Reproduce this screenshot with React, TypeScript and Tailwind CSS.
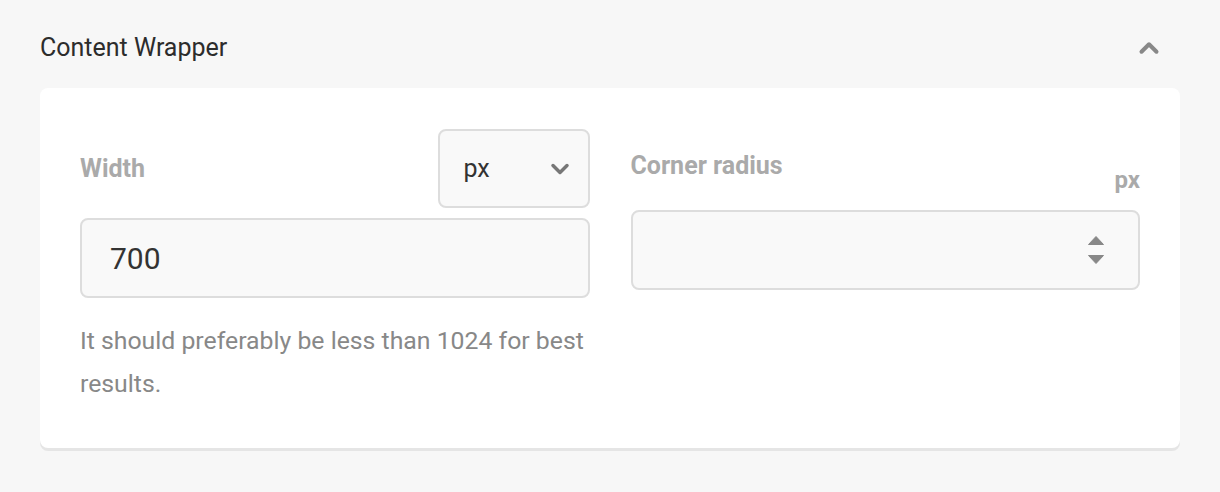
import { ChevronDown, ChevronUp } from 'lucide-react'

export default function App() {
  return (
    <div className="min-h-[492px] bg-[#f7f7f7] px-10 font-['Roboto',_'Liberation_Sans',_sans-serif]">
      <div className="flex h-[88px] items-center justify-between pt-[8px] pr-[16px]">
        <h2 className="text-[25px] text-[#2c2c2c]">Content Wrapper</h2>
        <ChevronUp size={30} strokeWidth={3.2} className="text-[#888]" />
      </div>

      <div className="grid grid-cols-2 gap-[41px] rounded-lg bg-white px-10 pt-[41px] pb-[43px] shadow-[0_3px_0_0_#e5e5e5]">
        {/* width */}
        <div>
          <div className="flex items-center justify-between">
            <label className="text-[25px] font-bold text-[#aaa]">Width</label>
            <div className="flex h-[79px] w-[152px] items-center justify-between rounded-lg border-2 border-[#ddd] bg-[#f9f9f9] pl-6 pr-[14px]">
              <span className="text-[25px] text-[#333]">px</span>
              <ChevronDown size={28} strokeWidth={3} className="text-[#777]" />
            </div>
          </div>
          <div className="mt-[10px] flex h-[80px] items-center rounded-lg border-2 border-[#ddd] bg-[#f9f9f9] px-[28px]">
            <span className="text-[30px] text-[#333]">700</span>
          </div>
          <p className="mt-[21px] text-[24.8px] leading-[43px] text-[#888]">
            It should preferably be less than 1024 for best results.
          </p>
        </div>

        {/* corner radius */}
        <div>
          <div className="flex h-[81px] justify-between">
            <label className="pt-[18px] text-[25px] font-bold text-[#aaa]">Corner radius</label>
            <span className="pt-[33px] text-[24px] font-bold text-[#aaa]">px</span>
          </div>
          <div className="flex h-[80px] items-center justify-end rounded-lg border-2 border-[#ddd] bg-[#f9f9f9] pr-[34px]">
            <div className="flex flex-col items-center gap-[10px]">
              <svg width="16" height="9" viewBox="0 0 16 9">
                <path d="M8 0.5 L15.5 8.5 H0.5 Z" fill="#888" strokeLinejoin="round" stroke="#888" strokeWidth="1" />
              </svg>
              <svg width="16" height="9" viewBox="0 0 16 9">
                <path d="M0.5 0.5 H15.5 L8 8.5 Z" fill="#888" strokeLinejoin="round" stroke="#888" strokeWidth="1" />
              </svg>
            </div>
          </div>
        </div>
      </div>
    </div>
  )
}
